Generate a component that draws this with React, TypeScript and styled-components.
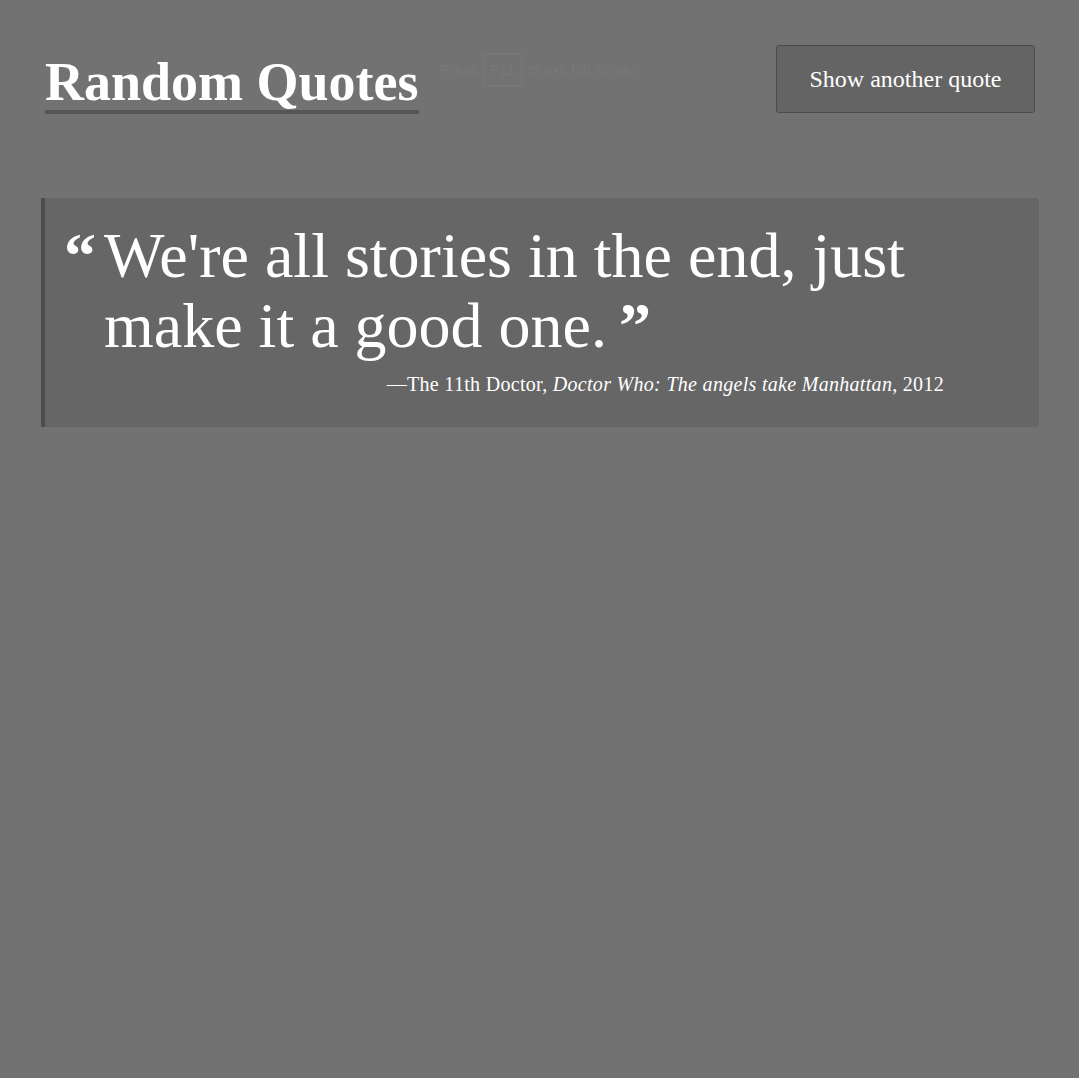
import React from "react";
import styled, { createGlobalStyle } from "styled-components";

const GlobalStyle = createGlobalStyle`
  html, body {
    margin: 0;
    padding: 0;
    background: #727272;
  }
  body {
    min-height: 100vh;
    font-family: "Liberation Serif", "Times New Roman", serif;
    color: #ffffff;
  }
`;

const Page = styled.div`
  position: relative;
  min-height: 1078px;
  padding: 45px 40px 0 41px;
  box-sizing: border-box;
`;

const Header = styled.header`
  display: flex;
  justify-content: space-between;
  align-items: flex-start;
  padding: 0 4px 0 4px;
`;

const Title = styled.h1`
  display: inline-block;
  margin: 10px 0 0 0;
  font-size: 54px;
  line-height: 54px;
  font-weight: 700;
  padding-bottom: 1px;
  border-bottom: 4px solid #555555;
  color: #ffffff;
`;

const Button = styled.button`
  box-sizing: border-box;
  height: 68px;
  min-width: 259px;
  padding: 0 32px;
  background: #646464;
  border: 1px solid #4c4c4c;
  border-radius: 3px;
  color: #ffffff;
  font-family: "Liberation Serif", "Times New Roman", serif;
  font-size: 24px;
  cursor: pointer;
`;

const Notice = styled.div`
  position: absolute;
  top: 53px;
  left: 50%;
  transform: translateX(-50%);
  display: flex;
  align-items: center;
  gap: 5px;
  font-family: "Liberation Sans", Arial, sans-serif;
  font-size: 15px;
  color: rgba(255, 255, 255, 0.06);
  white-space: nowrap;
  pointer-events: none;
`;

const Key = styled.span`
  display: inline-block;
  border: 1px solid rgba(255, 255, 255, 0.06);
  border-radius: 3px;
  padding: 7px 6px;
`;

const Card = styled.blockquote`
  margin: 84px 0 0 0;
  display: flex;
  gap: 8px;
  background: #666666;
  border-left: 4px solid #4d4d4d;
  border-radius: 0 4px 4px 0;
  padding: 23px 95px 29px 19px;
`;

const Mark = styled.span`
  font-size: 64px;
  line-height: 70px;
  font-weight: 700;
  width: 32px;
  flex: none;
`;

const Body = styled.div`
  flex: 1;
  min-width: 0;
`;

const QuoteText = styled.p`
  margin: 0;
  font-size: 64px;
  line-height: 70px;
  font-weight: 400;
`;

const CloseMark = styled.span`
  font-weight: 700;
  margin-left: 12px;
`;

const Attribution = styled.footer`
  margin-top: 9px;
  text-align: right;
  font-size: 20px;
  line-height: 28px;
  letter-spacing: 0.3px;
`;

export default function App() {
  return (
    <>
      <GlobalStyle />
      <Page>
        <Header>
          <Title>Random Quotes</Title>
          <Button>Show another quote</Button>
        </Header>
        <Notice>
          Press <Key>F11</Key> to exit full screen
        </Notice>
        <Card>
          <Mark>“</Mark>
          <Body>
            <QuoteText>
              We're all stories in the end, just make it a good one.<CloseMark>”</CloseMark>
            </QuoteText>
            <Attribution>
              —The 11th Doctor, <cite>Doctor Who: The angels take Manhattan</cite>, 2012
            </Attribution>
          </Body>
        </Card>
      </Page>
    </>
  );
}
